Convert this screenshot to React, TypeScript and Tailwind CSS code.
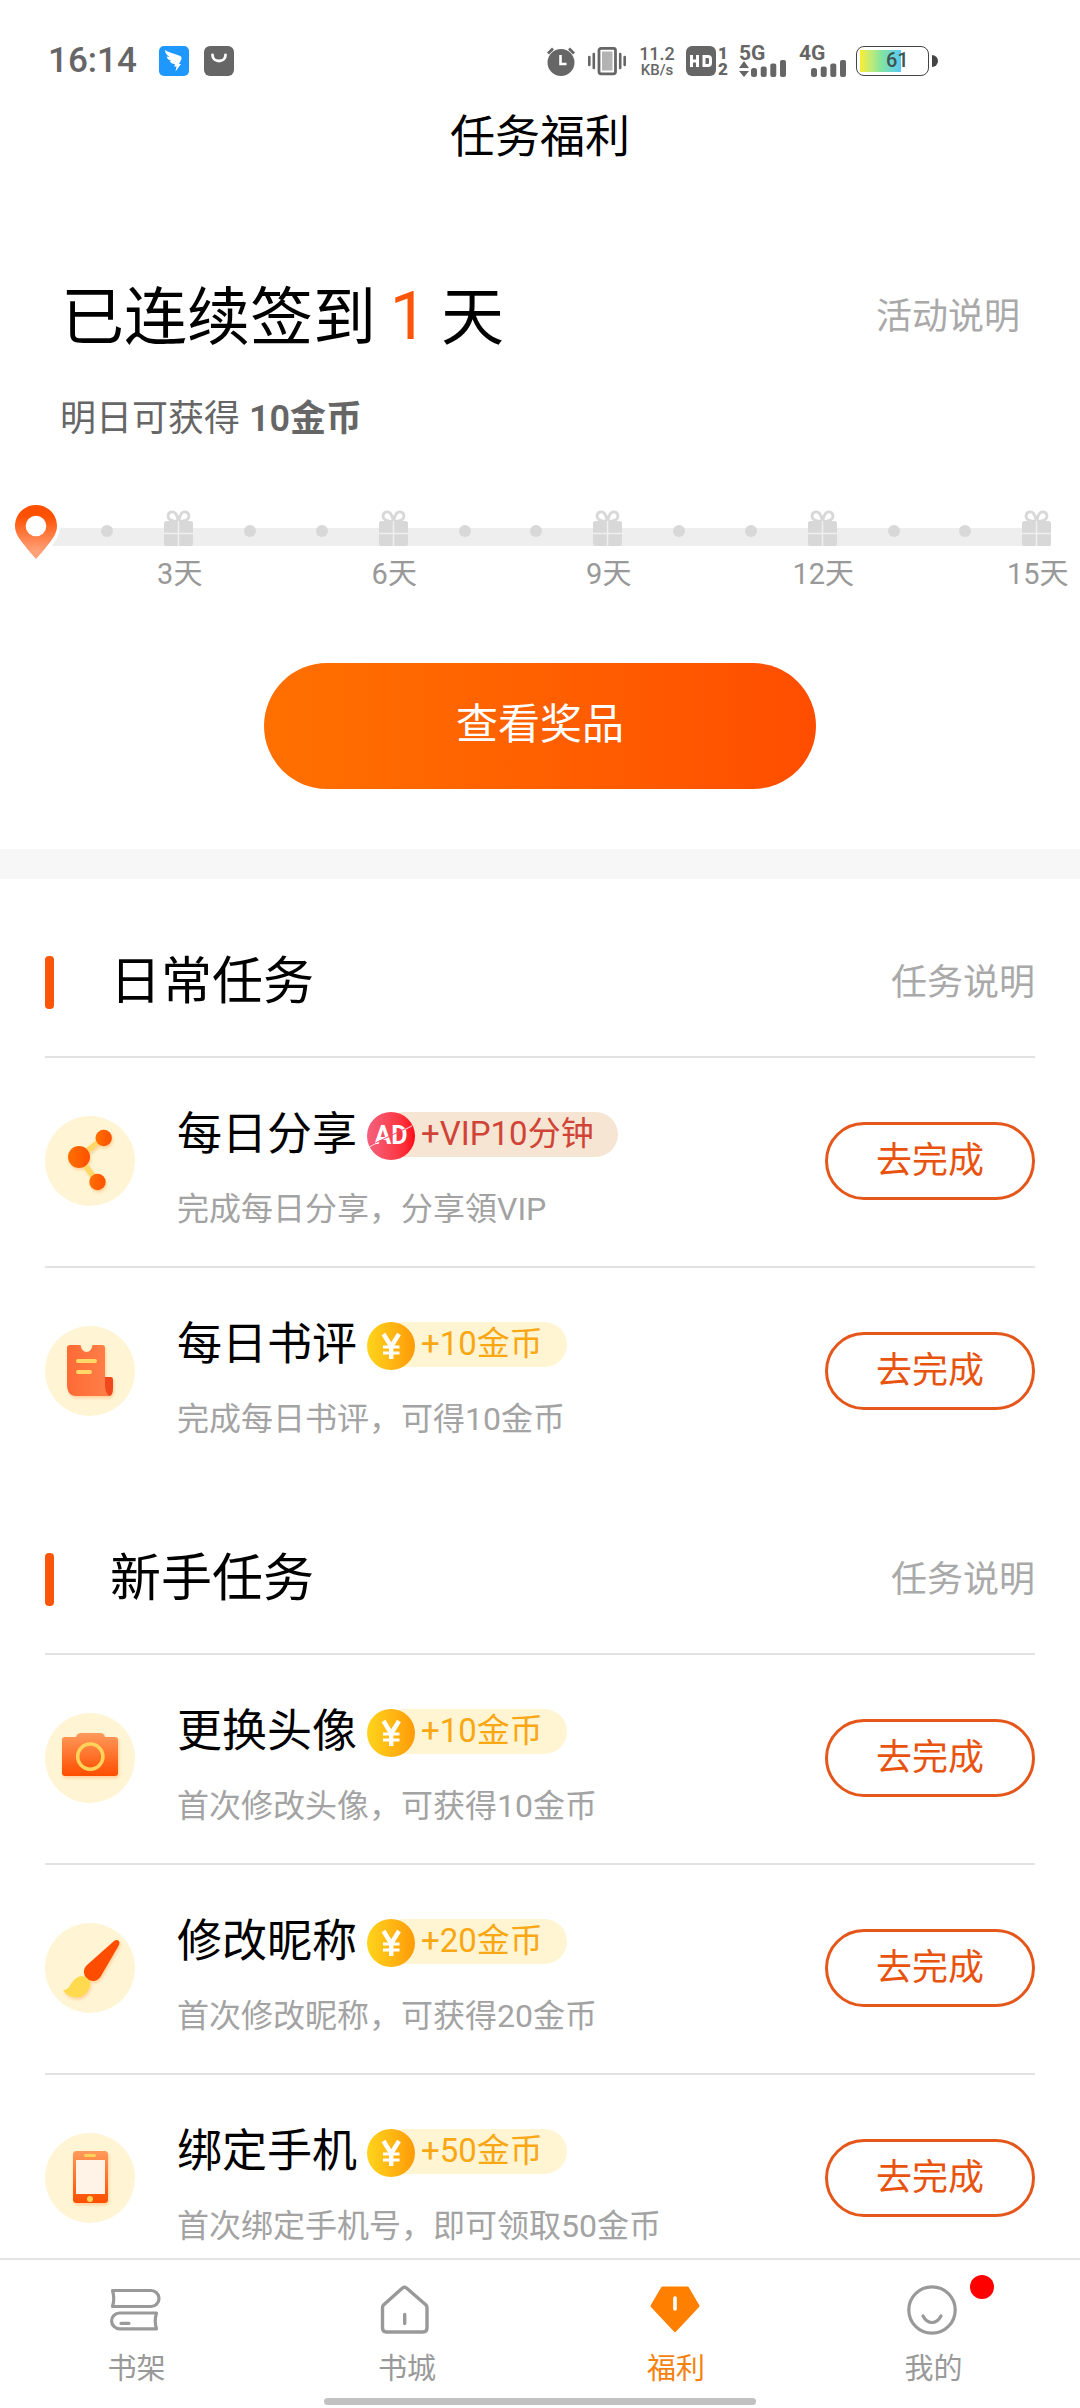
import React from "react";

type IconName = "share" | "note" | "camera" | "brush" | "phone";

function TaskIcon({ name }: { name: IconName }) {
  return (
    <svg viewBox="0 0 90 90" className="h-[90px] w-[90px] shrink-0">
      <defs>
        <linearGradient id="gDown" x1="0" y1="0" x2="0" y2="1">
          <stop offset="0" stopColor="#ff9a5c" />
          <stop offset="1" stopColor="#ff4e00" />
        </linearGradient>
        <linearGradient id="gSide" x1="0" y1="0" x2="1" y2="0">
          <stop offset="0" stopColor="#ff7000" />
          <stop offset="1" stopColor="#ff5000" />
        </linearGradient>
        <linearGradient id="gNote" x1="0" y1="0" x2="1" y2="0">
          <stop offset="0" stopColor="#ff6a35" />
          <stop offset="1" stopColor="#ff8049" />
        </linearGradient>
        <filter id="soft" x="-20%" y="-20%" width="150%" height="150%">
          <feDropShadow dx="1" dy="2" stdDeviation="1.5" floodColor="#ff8a30" floodOpacity="0.35" />
        </filter>
      </defs>
      <circle cx="45" cy="45" r="45" fill="#fff5d4" />
      {name === "share" && (
        <g filter="url(#soft)">
          <path d="M58.7 22 34 41l18.500 25" fill="none" stroke="#ffd868" strokeWidth="5.500" />
          <circle cx="34" cy="41" r="11" fill="url(#gSide)" />
          <circle cx="58.700" cy="22" r="8.200" fill="url(#gSide)" />
          <circle cx="52.500" cy="66" r="8.200" fill="url(#gSide)" />
        </g>
      )}
      {name === "note" && (
        <g filter="url(#soft)">
          <path d="M60 51h6q2 0 2 3v8q0 8-4 8h-4z" fill="#f0471a" />
          <path d="M25 19h10.500q1 7 6 7t6-7H57q3 0 3 3v37q0 9 5 11H31q-9 0-9-12V22q0-3 3-3z" fill="url(#gNote)" />
          <path d="M33 35h17M33 46h12" stroke="#ffd86b" strokeWidth="4" strokeLinecap="round" />
        </g>
      )}
      {name === "camera" && (
        <g filter="url(#soft)">
          <path d="M20 24h11q1-4 5-4h19q4 0 5 4h10q3 0 3 3v33q0 3-3 3H20q-3 0-3-3V27q0-3 3-3z" fill="url(#gDown)" />
          <circle cx="45.300" cy="43.600" r="12.600" fill="none" stroke="#ffd35a" strokeWidth="3.600" />
        </g>
      )}
      {name === "brush" && (
        <g filter="url(#soft)">
          <path d="M69 18q3-2 5 0 1 1.500 0 4L56 53q-3 5-8 5-8-1-9-8-.5-5 3-8z" fill="#ff4e00" />
          <path d="M18 67q5 0 8-6 5-8 11-8 7 1 8.500 8-3 13-14 13.500Q22 74 18 67z" fill="#ffda4f" />
        </g>
      )}
      {name === "phone" && (
        <g filter="url(#soft)">
          <rect x="28" y="18" width="35" height="52" rx="3.500" fill="url(#gDown)" />
          <rect x="31" y="27" width="29" height="34" fill="#fff3e8" />
          <path d="M40.500 22.600h9" stroke="#ffd35a" strokeWidth="3" strokeLinecap="round" />
          <circle cx="45" cy="66" r="3" fill="#ffd35a" />
        </g>
      )}
    </svg>
  );
}

function Badge({ kind, text }: { kind: "ad" | "coin"; text: string }) {
  const ad = kind === "ad";
  return (
    <div className={`ml-[10px] flex h-[48px] items-start ${ad ? "w-[251px]" : "w-[200px]"}`}>
      <div
        className={`relative z-10 flex h-[48px] w-[48px] shrink-0 items-center justify-center rounded-full text-white ${
          ad ? "bg-linear-to-r from-[#f4607c] to-[#ff0014]" : "bg-linear-to-r from-[#fed41c] to-[#ff9a08]"
        }`}
      >
        {ad ? (
          <>
            <span className="text-[25px] leading-[48px] font-bold">AD</span>
            <svg viewBox="0 0 48 48" className="absolute inset-0 h-[48px] w-[48px]">
              <path d="M3 33.500 45 13.500" stroke="#f8486a" strokeWidth="1" />
              <path d="M2 35 9 31.500M38 17.500l7-3.500" stroke="#fff" strokeWidth="1" opacity="0.8" />
            </svg>
          </>
        ) : (
          <svg viewBox="0 0 48 48" className="h-[48px] w-[48px]" fill="none" stroke="#fff">
            <path d="M16.500 12l7.700 12.500L32 12M24.200 24v13" strokeWidth="4.400" />
            <path d="M16 25h16.500M16 31h16.500" strokeWidth="3.200" />
          </svg>
        )}
      </div>
      <div
        className={`-ml-[34px] flex h-[45px] grow items-center rounded-full pl-[40px] text-[33px] leading-[45px] whitespace-nowrap ${
          ad ? "bg-[#f7e5d3] text-[#cf4436]" : "bg-[#fff5d3] text-[#f9a713]"
        }`}
      >
        <span className="-mt-[2px]">{text}</span>
      </div>
    </div>
  );
}

type Task = { icon: IconName; title: string; kind: "ad" | "coin"; reward: string; desc: string };

function TaskRow({ icon, title, kind, reward, desc }: Task) {
  return (
    <div className="flex h-[210px] border-t-2 border-[#e2e2e2] pt-[54px]">
      <div className="pt-[4px]">
        <TaskIcon name={icon} />
      </div>
      <div className="ml-[42px] grow">
        <div className="flex h-[48px]">
          <div className="-mt-[1px] text-[45px] leading-[48px] text-black">{title}</div>
          <Badge kind={kind} text={reward} />
        </div>
        <div className="mt-[29px] text-[32px] leading-[40px] text-[#a3a3a3]">{desc}</div>
      </div>
      <button className="mt-[10px] h-[78px] w-[210px] rounded-full border-[3px] border-[#e5561a] text-[36px] leading-[72px] text-[#e8530f]">
        去完成
      </button>
    </div>
  );
}

function Section({ title, tasks }: { title: string; tasks: Task[] }) {
  return (
    <section className="px-[45px]">
      <div className="flex h-[177px] items-center pt-[30px]">
        <div className="h-[53px] w-[9px] rounded-[4px] bg-[#fb5509]" />
        <h2 className="ml-[56px] grow pb-[2px] text-[51px] leading-[60px] text-black">{title}</h2>
        <span className="text-[36px] leading-[60px] text-[#a9a9a9]">任务说明</span>
      </div>
      {tasks.map((t) => (
        <TaskRow key={t.title} {...t} />
      ))}
    </section>
  );
}

function Gift() {
  return (
    <svg viewBox="0 0 29 36" className="h-[36px] w-[29px]">
      <path
        d="M14.500 11.500C12 11.500 4.500 11.500 4 6.500 4 2 9 .5 11.500 3.500c1.800 2.200 2.500 5 3 8 .5-3 1.200-5.800 3-8C20 .5 25 2 25 6.500c-.5 5-8 5-10.500 5z"
        fill="none"
        stroke="#d8d8d8"
        strokeWidth="2.800"
      />
      <rect x="0" y="11" width="29" height="25" rx="2.500" fill="#d8d8d8" />
      <path d="M14.500 11v25M0 23.500h29" stroke="#efefef" strokeWidth="1.500" />
    </svg>
  );
}

function Pin() {
  return (
    <svg viewBox="0 0 50 60" className="h-[60px] w-[50px]">
      <defs>
        <linearGradient id="pin" x1="0" y1="0" x2="0" y2="1">
          <stop offset="0.200" stopColor="#ff5000" />
          <stop offset="0.850" stopColor="#ffa077" />
        </linearGradient>
      </defs>
      <path
        d="M25 3C13 3 4 12.500 4 24c0 9 5 15 10 21.500L25 57l11-11.500C41 39 46 33 46 24 46 12.500 37 3 25 3z"
        fill="#fff"
        stroke="#fff"
        strokeWidth="6"
      />
      <path
        d="M25 3C13 3 4 12.500 4 24c0 6 3 11 6.500 15.500Q17 48.500 25 57q8-8.500 14.500-17.500C43 35 46 30 46 24 46 12.500 37 3 25 3z"
        fill="url(#pin)"
      />
      <circle cx="25" cy="24" r="10.300" fill="#fff" />
    </svg>
  );
}

function Timeline() {
  return (
    <div className="relative mt-[58px] h-[105px] w-[1080px]">
      <div className="absolute top-[26px] left-[36px] h-[18px] w-[1015px] bg-[#eeeeee]" />
      <div className="relative flex">
        {Array.from({ length: 15 }, (_, i) => {
          const day = i + 1;
          return (
            <div key={day} className="flex w-[71.500px] shrink-0 flex-col items-center">
              {day === 1 ? (
                <Pin />
              ) : day % 3 === 0 ? (
                <div className="flex flex-col items-center pt-[8px]">
                  <Gift />
                  <div className="pt-[10px] pl-[2px] text-center text-[29px] leading-[36px] whitespace-nowrap text-[#999999]">
                    {day}天
                  </div>
                </div>
              ) : (
                <div className="mt-[23px] h-[12px] w-[12px] rounded-full bg-[#d8d8d8]" />
              )}
            </div>
          );
        })}
      </div>
    </div>
  );
}

function Bars() {
  return (
    <svg viewBox="0 0 35 17" className="h-[17px] w-[35px]" fill="#666">
      <rect x="0" y="8" width="6" height="9" rx="2.500" />
      <rect x="9.700" y="6.500" width="6" height="10.500" rx="2" />
      <rect x="19.300" y="3.500" width="6" height="13.500" rx="2" />
      <rect x="29" y="0" width="6" height="17" rx="2" />
    </svg>
  );
}

function StatusBar() {
  return (
    <div className="flex h-[92px] items-start pt-[46px] pl-[48px] text-[#666]">
      <div className="w-[111px] text-[35px] leading-[30px] font-medium">16:14</div>
      <svg viewBox="0 0 30 30" className="h-[30px] w-[30px]">
        <rect width="30" height="30" rx="5" fill="#1e98ff" />
        <path d="M6 4c3 2 8 3.500 14 5.500 2.500.8 3 2 2.300 4L20 18h2l-5.500 7.500 1-5h-2.300l.8-2.500c-3 0-5-1.500-5.200-3l2.200.2C9.500 14 8 12.500 7.700 10.500l3 .8C8 9.500 6 7 6 4z" fill="#fff" />
      </svg>
      <svg viewBox="0 0 30 30" className="ml-[15px] h-[30px] w-[30px]">
        <rect width="30" height="30" rx="6" fill="#666" />
        <path d="M8.500 9c0 8 13 8 13 0" fill="none" stroke="#fff" strokeWidth="2.800" strokeLinecap="round" />
      </svg>
      <svg viewBox="0 0 30 30" className="ml-[312px] h-[30px] w-[30px]">
        <circle cx="15" cy="16.500" r="13.500" fill="#666" />
        <path d="M2 7.500l5-5M28 7.500l-5-5" stroke="#666" strokeWidth="2.800" />
        <path d="M14.500 9v9h6" fill="none" stroke="#fff" strokeWidth="2.600" />
      </svg>
      <svg viewBox="0 0 38 30" className="ml-[12px] h-[30px] w-[38px]">
        <rect x="11" y="2.300" width="16.500" height="25.500" rx="2" fill="#fff" stroke="#666" strokeWidth="2.800" />
        <rect x="14" y="5.500" width="10.500" height="19" fill="#b3b3b3" />
        <path d="M1.300 11v8M5.800 8v14M36.700 11v8M32.200 8v14" stroke="#666" strokeWidth="2.600" strokeLinecap="round" />
      </svg>
      <div className="ml-[10px] flex w-[42px] flex-col items-center font-medium">
        <span className="text-[18px] leading-[16px]">11.2</span>
        <span className="text-[15px] leading-[16px]">KB/s</span>
      </div>
      <svg viewBox="0 0 30 30" className="ml-[8px] h-[30px] w-[30px]">
        <rect width="30" height="30" rx="6" fill="#666" />
        <path d="M5.500 9v12M11.500 9v12M5.500 15h6M18 10.500h4q2.500 0 2.500 2.500v4q0 2.500-2.500 2.500h-4z" fill="none" stroke="#fff" strokeWidth="3" />
      </svg>
      <div className="flex w-[14px] flex-col items-center text-[17px] leading-[14px] font-black">
        <span>1</span>
        <span className="pt-[2px]">2</span>
      </div>
      <div className="ml-[9px] flex h-[30px] w-[48px] flex-col">
        <span className="h-[14px] text-[21px] leading-[14px] font-bold">5G</span>
        <div className="flex items-end">
          <svg viewBox="0 0 10 16" className="h-[16px] w-[10px]" fill="#666">
            <path d="M5 0l5 7H0zM0 10h10l-5 6z" />
          </svg>
          <span className="ml-[2px]">
            <Bars />
          </span>
        </div>
      </div>
      <div className="ml-[12px] flex h-[30px] w-[48px] flex-col">
        <span className="h-[14px] text-[21px] leading-[14px] font-bold">4G</span>
        <span className="ml-[12px]">
          <Bars />
        </span>
      </div>
      <div className="ml-[9px] flex items-center">
        <div className="relative h-[30px] w-[73px] rounded-[8px] border-[1.500px] border-[#444] p-[3px]">
          <div className="h-[22px] w-[41px] bg-linear-to-r from-[#f9ee26] via-[#86e59a] to-[#58c8f5]" />
          <span className="absolute top-0 left-[29px] text-[20px] leading-[27px] font-medium text-[#3d5550]">61</span>
        </div>
        <div className="ml-[3px] h-[12px] w-[6px] rounded-r-full bg-[#444]" />
      </div>
    </div>
  );
}

const daily: Task[] = [
  { icon: "share", title: "每日分享", kind: "ad", reward: "+VIP10分钟", desc: "完成每日分享，分享領VIP" },
  { icon: "note", title: "每日书评", kind: "coin", reward: "+10金币", desc: "完成每日书评，可得10金币" },
];

const newbie: Task[] = [
  { icon: "camera", title: "更换头像", kind: "coin", reward: "+10金币", desc: "首次修改头像，可获得10金币" },
  { icon: "brush", title: "修改昵称", kind: "coin", reward: "+20金币", desc: "首次修改昵称，可获得20金币" },
  { icon: "phone", title: "绑定手机", kind: "coin", reward: "+50金币", desc: "首次绑定手机号，即可领取50金币" },
];

function TabBar() {
  const label = "mt-[13px] text-[29px] leading-[44px]";
  return (
    <nav className="fixed inset-x-0 bottom-0 z-20 h-[150px] border-t-2 border-[#e4e4e4] bg-white text-[#999]">
      <div className="grid h-[138px] grid-cols-4 pt-[24px]">
        <div className="flex flex-col items-center">
          <svg viewBox="0 0 52 50" className="h-[50px] w-[52px]" fill="none" stroke="#999" strokeWidth="3.200" strokeLinejoin="round" strokeLinecap="round">
            <path d="M3.500 6.500H42a8 8 0 0 1 0 16H3.500q2.500-8 0-16zM47.500 29H10.500a7.900 7.900 0 0 0 0 15.800h37q-2.500-7.900 0-15.800zM12 39.300h8" />
          </svg>
          <span className={`${label} pl-[3px]`}>书架</span>
        </div>
        <div className="flex flex-col items-center">
          <svg viewBox="0 0 50 50" className="h-[50px] w-[50px]" fill="none" stroke="#999" strokeWidth="3.400" strokeLinejoin="round" strokeLinecap="round">
            <path d="M22.500 4q2-1.500 4 0L46 21q1 1 1 3v20q0 4-4 4H6.500q-4 0-4-4V24q0-2 1-3zM24.700 30.500v9" />
          </svg>
          <span className={`${label} pl-[4px]`}>书城</span>
        </div>
        <div className="flex flex-col items-center">
          <svg viewBox="0 0 50 50" className="h-[50px] w-[50px]">
            <path d="M12.500 4h25L48 22 25 46.500 2 22z" fill="#ff8000" stroke="#ff8000" strokeWidth="3" strokeLinejoin="round" />
            <path d="M25 14v11" stroke="#fff" strokeWidth="3.600" strokeLinecap="round" />
          </svg>
          <span className={`${label} pl-[2px] text-[#f5820f]`}>福利</span>
        </div>
        <div className="flex flex-col items-center pr-[26px]">
          <div className="relative">
            <svg viewBox="0 0 50 51" className="h-[51px] w-[50px]" fill="none" stroke="#999" strokeWidth="3.200" strokeLinecap="round">
              <circle cx="25" cy="26" r="23.200" />
              <path d="M16 32q3.500 6.500 9 6.500t9-6.500" />
            </svg>
            <div className="absolute -top-[9px] left-[63px] h-[24px] w-[24px] rounded-full bg-[#ff0000]" />
          </div>
          <span className="mt-[12px] pl-[3px] text-[29px] leading-[44px]">我的</span>
        </div>
      </div>
      <div className="mx-auto h-[7px] w-[432px] rounded-full bg-[#c1c1c1]" />
    </nav>
  );
}

export default function App() {
  return (
    <div className="h-[2408px] overflow-hidden bg-white font-[Roboto,'Noto_Sans_CJK_SC',sans-serif]">
      <StatusBar />
      <h1 className="h-[90px] pt-[2px] text-center text-[45px] leading-[88px] text-black">任务福利</h1>
      <div className="mt-[95px] flex h-[80px] items-center justify-between pr-[60px] pl-[61px]">
        <div className="text-[63px] leading-[80px] [word-spacing:-2px] whitespace-pre text-black">
          已连续签到 <span className="text-[67px] leading-[80px] text-[#fb5509]">1</span> 天
        </div>
        <span className="text-[36px] leading-[80px] text-[#a9a9a9]">活动说明</span>
      </div>
      <div className="mt-[37px] pl-[60px] text-[36px] leading-[50px] text-[#666]">
        明日可获得 <span className="font-semibold">10金币</span>
      </div>
      <Timeline />
      <button className="mx-auto mt-[56px] block h-[126px] w-[552px] rounded-full bg-linear-to-r from-[#ff7000] to-[#ff4d00] pb-[4px] text-[42px] text-white">
        查看奖品
      </button>
      <div className="mt-[60px] h-[30px] bg-[#f7f7f7]" />
      <Section title="日常任务" tasks={daily} />
      <Section title="新手任务" tasks={newbie} />
      <TabBar />
    </div>
  );
}
